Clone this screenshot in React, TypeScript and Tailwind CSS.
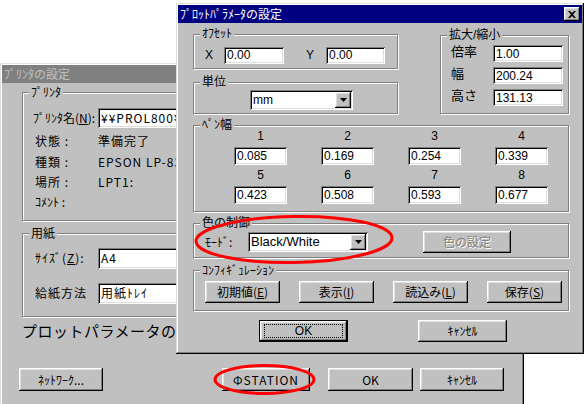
import type { ReactNode } from "react"

// win95 bevels
const winEdge = "shadow-[inset_-1px_-1px_#000,inset_1px_1px_#dfdfdf,inset_-2px_-2px_#808080,inset_2px_2px_#fff]"
const raised = "shadow-[inset_-1px_-1px_#000,inset_1px_1px_#fff,inset_-2px_-2px_#808080,inset_2px_2px_#dfdfdf]"
const sunken = "shadow-[inset_1px_1px_#808080,inset_-1px_-1px_#fff,inset_2px_2px_#000,inset_-2px_-2px_#dfdfdf]"

const jp = "font-['Noto_Sans_CJK_JP',sans-serif]"
const ui = "font-['Liberation_Sans','Noto_Sans_CJK_JP',sans-serif]"

function Group({ label, className = "", children }: { label: string; className?: string; children?: ReactNode }) {
  return (
    <div className={`relative border border-[#808080] shadow-[inset_1px_1px_#fff,1px_1px_#fff] ${className}`}>
      <span className="absolute -top-[8px] left-[6px] bg-[#c0c0c0] px-[2px] leading-[14px]">{label}</span>
      {children}
    </div>
  )
}

function Field({ value, className = "" }: { value: string; className?: string }) {
  return (
    <div className={`flex items-center bg-white pl-[3px] leading-[14px] ${sunken} ${className}`}>{value}</div>
  )
}

function Btn({ children, className = "" }: { children: ReactNode; className?: string }) {
  return (
    <button type="button" className={`flex items-center justify-center bg-[#c0c0c0] leading-[14px] ${raised} ${className}`}>
      {children}
    </button>
  )
}

function Arrow() {
  return (
    <div className={`flex h-[16px] w-[16px] items-center justify-center bg-[#c0c0c0] ${raised}`}>
      <svg width="7" height="4" viewBox="0 0 7 4">
        <polygon points="0,0 7,0 3.5,4" fill="#000" />
      </svg>
    </div>
  )
}

function Select({ value, className = "" }: { value: string; className?: string }) {
  return (
    <div className={`flex items-center justify-between bg-white pl-[3px] pr-[2px] leading-[14px] ${sunken} ${className}`}>
      <span>{value}</span>
      <Arrow />
    </div>
  )
}

const pens = [
  ["1", "0.085"],
  ["2", "0.169"],
  ["3", "0.254"],
  ["4", "0.339"],
  ["5", "0.423"],
  ["6", "0.508"],
  ["7", "0.593"],
  ["8", "0.677"],
]

function PrinterWindow() {
  return (
    <div className={`absolute left-0 top-[63px] flex h-[345px] w-[524px] flex-col bg-[#c0c0c0] p-[2px] ${winEdge} ${jp} text-[12px] text-black`}>
      <div className="h-[18px] bg-[#808080] px-[2px] leading-[18px] text-[#c0c0c0]">ﾌﾟﾘﾝﾀの設定</div>

      <div className="flex flex-col pl-[20px] pt-[9px]">
        <Group label="ﾌﾟﾘﾝﾀ" className="h-[129px] w-[490px]">
          <div className="flex flex-col pl-[10px] pt-[15px]">
            <div className="flex h-[20px] items-center">
              <span className="w-[65px]">ﾌﾟﾘﾝﾀ名(<u>N</u>):</span>
              <Field value="¥¥PROL800¥" className="h-[20px] w-[300px] tracking-[1px]" />
            </div>
            <div className="mt-[2px] flex h-[22px] items-center pl-[2px] tracking-[1px]">
              <span className="w-[63px]">状態 :</span>
              <span>準備完了</span>
            </div>
            <div className="flex h-[20px] items-center pl-[2px] tracking-[1px]">
              <span className="w-[63px]">種類 :</span>
              <span>EPSON LP-8300</span>
            </div>
            <div className="flex h-[20px] items-center pl-[2px] tracking-[1px]">
              <span className="w-[63px]">場所 :</span>
              <span>LPT1:</span>
            </div>
            <div className="flex h-[20px] items-center pl-[2px]">
              <span className="w-[63px]">ｺﾒﾝﾄ :</span>
            </div>
          </div>
        </Group>

        <Group label="用紙" className="mt-[12px] h-[84px] w-[490px]">
          <div className="flex flex-col gap-[15px] pl-[12px] pt-[14px] tracking-[1px]">
            <div className="flex h-[20px] items-center">
              <span className="w-[63px]">ｻｲｽﾞ(<u>Z</u>):</span>
              <Field value="A4" className="h-[21px] w-[300px]" />
            </div>
            <div className="flex h-[20px] items-center">
              <span className="w-[63px]">給紙方法</span>
              <Field value="用紙ﾄﾚｲ" className="h-[21px] w-[300px]" />
            </div>
          </div>
        </Group>

        <div className="mt-[4px] h-[20px] text-[15px] leading-[20px] tracking-[0.5px]">プロットパラメータの設定</div>
      </div>

      <div className="mt-[27px] flex pl-[17px]">
        <Btn className="h-[23px] w-[84px]">ﾈｯﾄﾜｰｸ...</Btn>
        <Btn className="ml-[119px] h-[23px] w-[88px] tracking-[1px]">ΦSTATION</Btn>
        <Btn className="ml-[18px] h-[23px] w-[85px]">OK</Btn>
        <Btn className="ml-[7px] h-[23px] w-[84px]">ｷｬﾝｾﾙ</Btn>
      </div>
    </div>
  )
}

function PlotWindow() {
  return (
    <div className={`absolute left-[176px] top-[3px] flex h-[351px] w-[408px] flex-col bg-[#c0c0c0] p-[2px] ${winEdge} ${ui} text-[12px] text-black`}>
      <div className={`flex h-[18px] items-start justify-between bg-[#000080] pl-[2px] leading-[18px] text-white ${jp}`}>
        <span>ﾌﾟﾛｯﾄﾊﾟﾗﾒｰﾀの設定</span>
        <div className={`mr-[2px] mt-[2px] flex h-[14px] w-[16px] items-center justify-center bg-[#c0c0c0] ${raised}`}>
          <svg width="8" height="7" viewBox="0 0 8 7">
            <path d="M0 0h2l2 2 2-2h2L5 3.5 8 7H6L4 5 2 7H0l3-3.5z" fill="#000" />
          </svg>
        </div>
      </div>

      <div className="flex flex-col pl-[15px] pr-[13px] pt-[11px]">
        <div className="flex justify-between">
          <div className="flex w-[205px] flex-col">
            <Group label="ｵﾌｾｯﾄ" className="h-[35px]">
              <div className="flex items-center pl-[11px] pt-[11px]">
                <span className="w-[19px]">X</span>
                <Field value="0.00" className="h-[17px] w-[60px]" />
                <span className="ml-[22px] w-[20px]">Y</span>
                <Field value="0.00" className="h-[17px] w-[59px]" />
              </div>
            </Group>
            <Group label="単位" className="mt-[13px] h-[32px]">
              <div className="pl-[56px] pt-[7px]">
                <Select value="mm" className="h-[20px] w-[103px]" />
              </div>
            </Group>
          </div>

          <Group label="拡大/縮小" className="mt-[1px] h-[79px] w-[129px]">
            <div className="flex flex-col gap-[5px] pl-[10px] pt-[9px]">
              {[
                ["倍率", "1.00"],
                ["幅", "200.24"],
                ["高さ", "131.13"],
              ].map(([k, v]) => (
                <div key={k} className="flex items-center">
                  <span className="-mt-[3px] w-[42px] text-[13px]">{k}</span>
                  <Field value={v} className="h-[17px] w-[70px]" />
                </div>
              ))}
            </div>
          </Group>
        </div>

        <Group label="ﾍﾟﾝ幅" className="mt-[11px] h-[87px]">
          <div className="grid grid-cols-[repeat(4,87px)] gap-y-[3px] pl-[23px] pt-[3px]">
            {pens.map(([n, v]) => (
              <div key={n} className="flex flex-col items-center">
                <span className="h-[14px] leading-[14px]">{n}</span>
                <Field value={v} className="mt-[4px] h-[18px] w-[53px]" />
              </div>
            ))}
          </div>
        </Group>

        <Group label="色の制御" className="mt-[11px] h-[35px]">
          <div className="flex items-center pl-[11px] pt-[7px]">
            <span className={`w-[43px] ${jp}`}>ﾓｰﾄﾞ:</span>
            <Select value="Black/White" className="h-[20px] w-[120px] text-[13px]" />
            <Btn className={`ml-[55px] h-[22px] w-[88px] text-[#808080] [text-shadow:1px_1px_#fff] ${jp}`}>色の設定</Btn>
          </div>
        </Group>

        <Group label="ｺﾝﾌｨｷﾞｭﾚｰｼｮﾝ" className={`mt-[12px] h-[41px] ${jp}`}>
          <div className="flex gap-[19px] pl-[11px] pt-[10px]">
            <Btn className="h-[22px] w-[75px]">初期値(<u>E</u>)</Btn>
            <Btn className="h-[22px] w-[75px]">表示(<u>I</u>)</Btn>
            <Btn className="h-[22px] w-[75px]">読込み(<u>L</u>)</Btn>
            <Btn className="h-[22px] w-[75px]">保存(<u>S</u>)</Btn>
          </div>
        </Group>

        <div className="mt-[9px] flex">
          <div className="ml-[66px] h-[22px] w-[89px] border border-black">
            <Btn className="h-full w-full">
              <span className="flex h-[14px] w-[79px] items-center justify-center border border-dotted border-black">OK</span>
            </Btn>
          </div>
          <Btn className={`ml-[70px] h-[22px] w-[89px] ${jp}`}>ｷｬﾝｾﾙ</Btn>
        </div>
      </div>
    </div>
  )
}

export default function App() {
  return (
    <div className="relative h-[404px] w-[584px] overflow-hidden bg-white">
      <PrinterWindow />
      <PlotWindow />
      <svg className="pointer-events-none absolute left-0 top-0" width="584" height="404">
        <ellipse cx="294" cy="239.5" rx="98" ry="23" fill="none" stroke="#ff0000" strokeWidth="3" transform="rotate(-1 294 239.5)" />
        <ellipse cx="264.5" cy="379.5" rx="49.5" ry="14" fill="none" stroke="#ff0000" strokeWidth="3" />
      </svg>
    </div>
  )
}
